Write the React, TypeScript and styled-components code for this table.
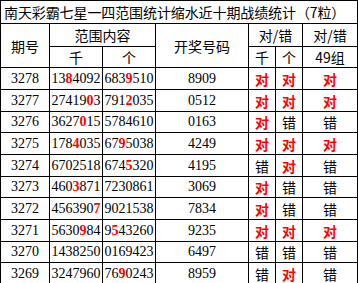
import React from 'react';
import styled, { createGlobalStyle } from 'styled-components';

interface Row {
  issue: string;
  thousands: string;
  thousandsHit: number;
  units: string;
  unitsHit: number;
  draw: string;
  results: [boolean, boolean, boolean];
}

const rows: Row[] = [
  { issue: '3278', thousands: '1384092', thousandsHit: 2, units: '6839510', unitsHit: 3, draw: '8909', results: [true, true, true] },
  { issue: '3277', thousands: '2741903', thousandsHit: 5, units: '7912035', unitsHit: 3, draw: '0512', results: [true, true, true] },
  { issue: '3276', thousands: '3627015', thousandsHit: 4, units: '5784610', unitsHit: -1, draw: '0163', results: [true, false, false] },
  { issue: '3275', thousands: '1784035', thousandsHit: 3, units: '6795038', unitsHit: 2, draw: '4249', results: [true, true, true] },
  { issue: '3274', thousands: '6702518', thousandsHit: -1, units: '6745320', unitsHit: 3, draw: '4195', results: [false, true, false] },
  { issue: '3273', thousands: '4603871', thousandsHit: 3, units: '7230861', unitsHit: -1, draw: '3069', results: [true, false, false] },
  { issue: '3272', thousands: '4563907', thousandsHit: 6, units: '9021538', unitsHit: -1, draw: '7834', results: [true, false, false] },
  { issue: '3271', thousands: '5630984', thousandsHit: 4, units: '9543260', unitsHit: 1, draw: '9235', results: [true, true, true] },
  { issue: '3270', thousands: '1438250', thousandsHit: -1, units: '0169423', unitsHit: -1, draw: '6497', results: [false, false, false] },
  { issue: '3269', thousands: '3247960', thousandsHit: -1, units: '7690243', unitsHit: 2, draw: '8959', results: [false, true, false] },
];

const GlobalStyle = createGlobalStyle`
  html, body {
    margin: 0;
    padding: 0;
    background: #fff;
  }
`;

const Table = styled.table`
  width: 357px;
  table-layout: fixed;
  border-collapse: collapse;
  color: #000;
  font-family: "Noto Sans CJK SC", sans-serif;
  font-size: 14px;
`;

const Cell = styled.td<{ $align?: 'left' | 'center' }>`
  border: 1px solid #000;
  padding: 0;
  text-align: ${props => props.$align || 'center'};
  vertical-align: middle;
  white-space: nowrap;
  overflow: hidden;
  line-height: 1;
`;

const TitleCell = styled(Cell)`
  padding-left: 3px;
  letter-spacing: -0.1px;
`;

const NumCell = styled(Cell)`
  font-family: "Liberation Serif", "Times New Roman", serif;
  font-size: 14px;
`;

const Hit = styled.span`
  color: #f00;
  font-weight: bold;
`;

const Mark = styled.span<{ $ok: boolean }>`
  color: ${props => (props.$ok ? '#f00' : '#000')};
  font-weight: ${props => (props.$ok ? 'bold' : 'normal')};
`;

const TableRow = styled.tr<{ $h: number }>`
  height: ${props => props.$h}px;
`;

const Digits: React.FC<{ value: string; hit: number }> = ({ value, hit }) => (
  <>
    {value.split('').map((d, i) => (i === hit ? <Hit key={i}>{d}</Hit> : <span key={i}>{d}</span>))}
  </>
);

const rowHeights = [22, 22, 21, 22, 22, 21, 22, 22, 21, 22];

const App: React.FC = () => {
  return (
    <>
      <GlobalStyle />
      <Table>
        <colgroup>
          <col style={{ width: 49 }} />
          <col style={{ width: 53 }} />
          <col style={{ width: 53 }} />
          <col style={{ width: 93 }} />
          <col style={{ width: 27 }} />
          <col style={{ width: 27 }} />
          <col style={{ width: 55 }} />
        </colgroup>
        <tbody>
          <TableRow $h={23}>
            <TitleCell colSpan={7} $align="left">南天彩霸七星一四范围统计缩水近十期战绩统计（7粒）</TitleCell>
          </TableRow>
          <TableRow $h={23}>
            <Cell rowSpan={2}>期号</Cell>
            <Cell colSpan={2}>范围内容</Cell>
            <Cell rowSpan={2}>开奖号码</Cell>
            <Cell colSpan={2}>对/错</Cell>
            <Cell>对/错</Cell>
          </TableRow>
          <TableRow $h={21}>
            <Cell>千</Cell>
            <Cell>个</Cell>
            <Cell>千</Cell>
            <Cell>个</Cell>
            <Cell>49组</Cell>
          </TableRow>
          {rows.map((r, i) => (
            <TableRow key={r.issue} $h={rowHeights[i]}>
              <NumCell>{r.issue}</NumCell>
              <NumCell><Digits value={r.thousands} hit={r.thousandsHit} /></NumCell>
              <NumCell><Digits value={r.units} hit={r.unitsHit} /></NumCell>
              <NumCell>{r.draw}</NumCell>
              {r.results.map((ok, j) => (
                <Cell key={j}><Mark $ok={ok}>{ok ? '对' : '错'}</Mark></Cell>
              ))}
            </TableRow>
          ))}
        </tbody>
      </Table>
    </>
  );
};

export default App;
